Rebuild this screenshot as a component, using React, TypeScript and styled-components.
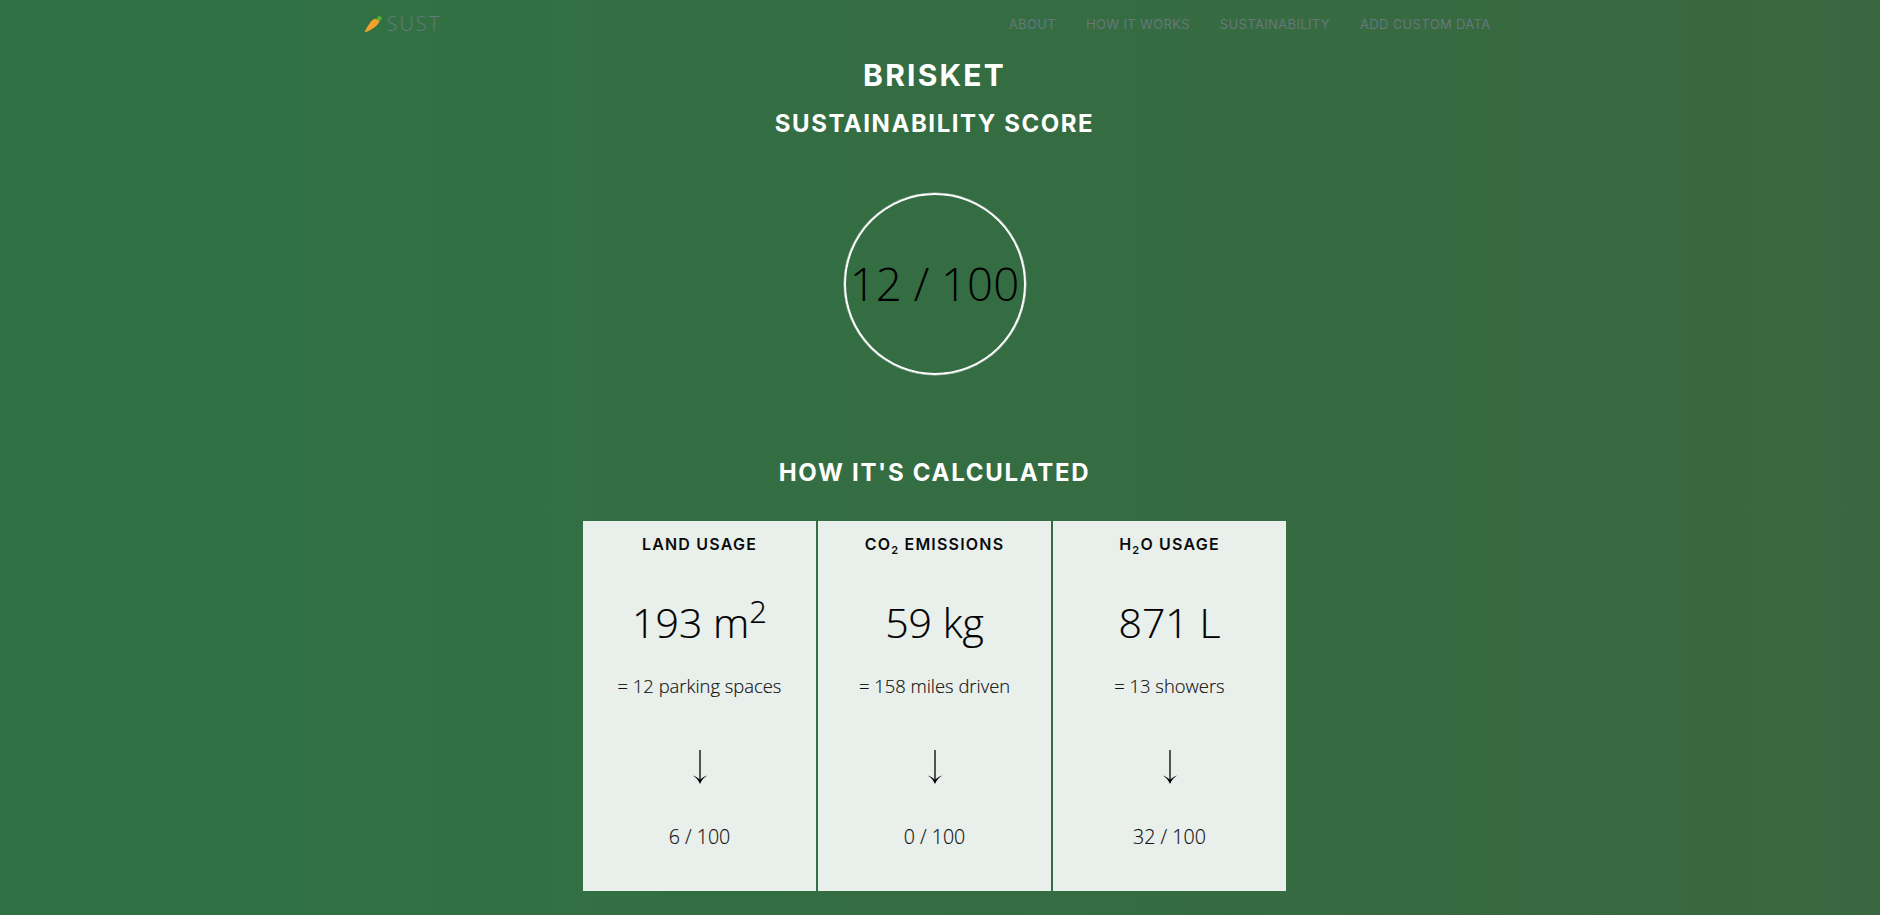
import React from "react";
import styled, { createGlobalStyle } from "styled-components";

const Global = createGlobalStyle`
  html, body { margin: 0; padding: 0; height: 100%; }
  body {
    font-family: "Open Sans", "Liberation Sans", sans-serif;
    background: linear-gradient(90deg, #2f7345 0%, #3a673f 100%);
    background-attachment: fixed;
    overflow: hidden;
  }
`;

const heading = `font-family: Inter, "Liberation Sans", sans-serif; text-align: center; color: #fff; margin: 0; font-weight: 700;`;

const Page = styled.div`
  width: 1869px;
  height: 915px;
  display: flex;
  flex-direction: column;
  align-items: center;
`;

const Navbar = styled.nav`
  width: 1140px;
  height: 47px;
  padding: 0 14px 0 0;
  box-sizing: border-box;
  display: flex;
  align-items: center;
  justify-content: space-between;
`;

const Brand = styled.a`
  display: flex;
  align-items: center;
  gap: 3px;
  font-size: 20px;
  font-weight: 300;
  letter-spacing: 2px;
  color: #66797c;
  svg { margin-left: -1px; }
`;

const Links = styled.div`
  display: flex;
  gap: 30px;
`;

const NavLink = styled.a`
  font-family: Inter, "Liberation Sans", sans-serif;
  font-size: 13px;
  letter-spacing: 0.35px;
  color: #66777c;
`;

const Title = styled.h1`
  ${heading}
  font-size: 30px;
  line-height: 36px;
  margin-top: 10px;
  letter-spacing: 2.2px;
`;

const Subtitle = styled.h2`
  ${heading}
  font-size: 24px;
  line-height: 29px;
  margin-top: 16px;
  letter-spacing: 1.55px;
`;

const Circle = styled.div`
  box-sizing: border-box;
  width: 182px;
  height: 182px;
  margin-top: 55px;
  padding-bottom: 2px;
  border: 2px solid #fff;
  border-radius: 50%;
  box-shadow: 0 0 0 0.5px rgba(255, 255, 255, 0.6);
  display: flex;
  align-items: center;
  justify-content: center;
  white-space: nowrap;
  font-size: 45.6px;
  font-weight: 300;
  color: #000;
`;

const Section = styled.h2`
  ${heading}
  font-size: 24px;
  line-height: 29px;
  margin-top: 83px;
  letter-spacing: 1.7px;
`;

const Cards = styled.div`
  display: grid;
  grid-template-columns: repeat(3, 233.5px);
  gap: 1.5px;
  margin-top: 34px;
`;

const Card = styled.div`
  height: 370px;
  box-sizing: border-box;
  background: #e9efeb;
  display: flex;
  flex-direction: column;
  align-items: center;
  padding-top: 13px;
`;

const CardTitle = styled.h3`
  font-family: Inter, "Liberation Sans", sans-serif;
  font-size: 16px;
  line-height: 20px;
  font-weight: 600;
  letter-spacing: 1.2px;
  color: #0b0b0b;
  margin: 0;
  sub { font-size: 11px; line-height: 0; }
`;

const Value = styled.div`
  font-size: 41px;
  line-height: 54px;
  font-weight: 300;
  color: #000;
  -webkit-text-stroke: 0.2px #000;
  margin-top: 41px;
  sup { font-size: 31px; line-height: 0; font-weight: 300; }
`;

const Equal = styled.div`
  font-size: 18.4px;
  line-height: 24px;
  font-weight: 300;
  color: #111;
  -webkit-text-stroke: 0.15px #111;
  margin-top: 25px;
`;

const Arrow = styled.svg`
  width: 16px;
  height: 34px;
  margin-top: 52px;
  flex: none;
`;

const Score = styled.div`
  font-size: 19.6px;
  line-height: 26px;
  font-weight: 300;
  color: #111;
  -webkit-text-stroke: 0.15px #111;
  margin-top: 40px;
`;

const Carrot = () => (
  <svg width="20" height="20" viewBox="0 0 18 18">
    <path d="M11.600 4.400C9.300 4 7.400 5.300 5.900 7.300 4 9.900 2.300 12.800.9 15.400c-.3.700.2 1.200.9.900 3-1.300 6.300-3.200 8.900-5.300 2.400-2 3.500-3.700 2.800-5.600-.3-.5-1.300-.9-1.900-1z" fill="#f6a02c" />
    <path d="M10.800 5c.6-.6 1.300-1 1.600-1.600.1-.9.100-1.700.3-2.500l1.100 1.500 1.500-.9-.3 1.800 1.800.4-1.600 1.300-1.200 2c-.6-1-1.900-1.600-3.200-2z" fill="#5cb531" />
  </svg>
);

const DownArrow = () => (
  <Arrow viewBox="0 1 16 34">
    <path d="M8 1v32" stroke="#000" strokeWidth="1.3" fill="none" />
    <path d="M.8 26.500C3.500 28 6.500 31 8 35c1.500-4 4.500-7 7.200-8.500C12.500 27.300 10 28.600 8 31 6 28.600 3.500 27.300.8 26.500z" fill="#000" />
  </Arrow>
);

const data = [
  { title: <>LAND USAGE</>, value: <>193 m<sup>2</sup></>, eq: "= 12 parking spaces", score: "6 / 100" },
  { title: <>CO<sub>2</sub> EMISSIONS</>, value: <>59 kg</>, eq: "= 158 miles driven", score: "0 / 100" },
  { title: <>H<sub>2</sub>O USAGE</>, value: <>871 L</>, eq: "= 13 showers", score: "32 / 100" },
];

export default function App() {
  return (
    <>
      <Global />
      <Page>
        <Navbar>
          <Brand><Carrot />SUST</Brand>
          <Links>
            <NavLink>ABOUT</NavLink>
            <NavLink>HOW IT WORKS</NavLink>
            <NavLink>SUSTAINABILITY</NavLink>
            <NavLink>ADD CUSTOM DATA</NavLink>
          </Links>
        </Navbar>
        <Title>BRISKET</Title>
        <Subtitle>SUSTAINABILITY SCORE</Subtitle>
        <Circle>12 / 100</Circle>
        <Section>HOW IT'S CALCULATED</Section>
        <Cards>
          {data.map((d) => (
            <Card key={d.eq}>
              <CardTitle>{d.title}</CardTitle>
              <Value>{d.value}</Value>
              <Equal>{d.eq}</Equal>
              <DownArrow />
              <Score>{d.score}</Score>
            </Card>
          ))}
        </Cards>
      </Page>
    </>
  );
}
